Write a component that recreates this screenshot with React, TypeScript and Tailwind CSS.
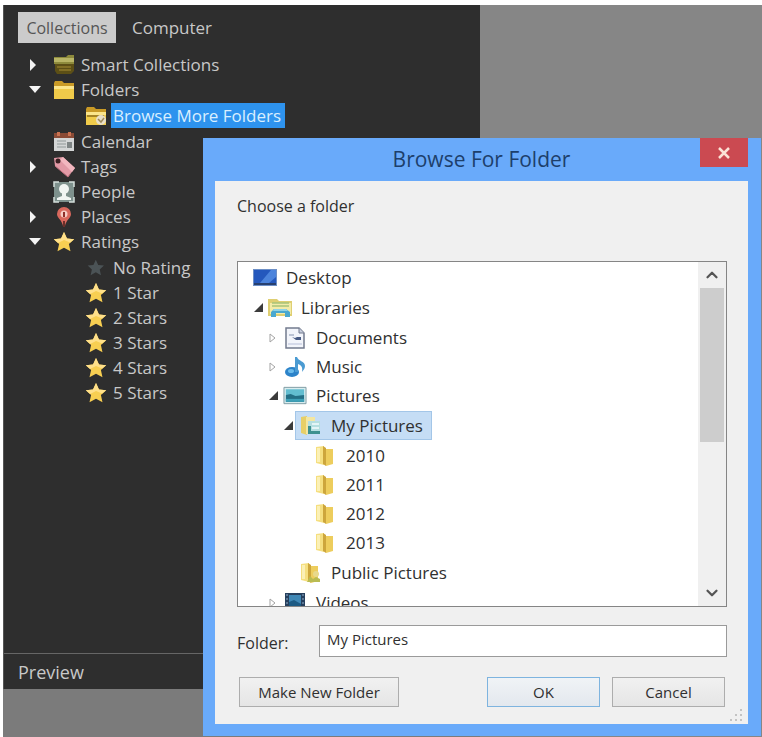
import { useState, type ReactNode } from "react";
import { ChevronDown, ChevronUp } from "lucide-react";
import { clsx } from "clsx";

type TreeNode = {
  label: string;
  icon: ReactNode;
  open?: boolean;
  closed?: boolean;
  children?: TreeNode[];
};

function Star({ muted = false }: { muted?: boolean }) {
  return (
    <svg width="22" height="22" viewBox="0 0 22 22" aria-hidden="true">
      <path
        d="M11 1l3 6.6 7.2.6-5.3 4.9 1.6 7.2L11 16.700l-6.500 3.600 1.600-7.200L.8 8.200 8 7.600z"
        fill={muted ? "#4b5356" : "#f8cf52"}
        transform={muted ? "translate(2 2) scale(.8)" : undefined}
      />
      {!muted && <path d="M11 1l3 6.600 7.200.6-4 3.200L11 9 5 12 .8 8.200 8 7.600z" fill="#ffe08a" />}
    </svg>
  );
}

function SmartIcon() {
  return (
    <svg width="22" height="22" viewBox="0 0 22 22" aria-hidden="true">
      <path d="M1 3h12l2-2h6v9H1z" fill="#8d8a3c" />
      <path d="M1 4h20v4H1z" fill="#b9b566" />
      <path d="M2 10h19v7l-3 3H4l-2-3z" fill="#5c4f16" />
      <path d="M4 13h14M6 16h12" stroke="#8d7a2b" strokeWidth="1.500" />
    </svg>
  );
}

function FolderIcon({ badge = false }: { badge?: boolean }) {
  return (
    <svg width="22" height="22" viewBox="0 0 22 22" aria-hidden="true">
      <path d="M1 4l1-2h7l2 2h10v15H1z" fill="#c99a26" />
      <path d="M1 7h20v13H1z" fill="#f0cb4a" />
      <path d="M1 7h20v3H1z" fill="#fbe58b" />
      {badge && (
        <>
          <path d="M2 11h17" stroke="#8c6d1b" strokeWidth="1.500" />
          <circle cx="16" cy="15" r="5" fill="#e8dfc8" />
          <path d="M13 14l3 3 3-4" fill="none" stroke="#a08a5a" strokeWidth="1.500" />
        </>
      )}
    </svg>
  );
}

function CalendarIcon() {
  return (
    <svg width="22" height="22" viewBox="0 0 22 22" aria-hidden="true">
      <path d="M1 2h20v6H1z" fill="#8a4b36" />
      <path d="M4 1h3v4H4zM15 1h3v4h-3z" fill="#c9714f" />
      <path d="M1 7h20v13H1z" fill="#d4d6d6" />
      <path d="M4 10h9M4 13h9M4 16h9" stroke="#a7adad" strokeWidth="1.500" />
      <path d="M14 11h5v6h-5z" fill="#7f8585" />
    </svg>
  );
}

function TagIcon() {
  return (
    <svg width="22" height="22" viewBox="0 0 22 22" aria-hidden="true">
      <path d="M1 2l9-1 12 11-7 9L2 10z" fill="#e29aa6" />
      <path d="M10 1l12 11-3 4L7 4z" fill="#f2b7bf" />
      <circle cx="5" cy="5" r="2.500" fill="#3b2023" />
      <path d="M2 10l13 11 2-3" fill="none" stroke="#b96c79" />
    </svg>
  );
}

function PeopleIcon() {
  return (
    <svg width="22" height="22" viewBox="0 0 22 22" aria-hidden="true">
      <path d="M1 1h20v20H1z" fill="#7e918d" />
      <path d="M1 6V1h5M16 1h5v5M21 16v5h-5M6 21H1v-5" fill="none" stroke="#d5dfdc" strokeWidth="1.500" />
      <circle cx="11" cy="8" r="5" fill="#f1f5f3" />
      <path d="M9 11h4v4l5 2v2H4v-2l5-2z" fill="#f1f5f3" />
    </svg>
  );
}

function PlaceIcon() {
  return (
    <svg width="22" height="22" viewBox="0 0 22 22" aria-hidden="true">
      <path d="M11 1a7 7 0 0 0-7 7c0 4 5 6 6 12h2c1-6 6-8 6-12a7 7 0 0 0-7-7z" fill="#d9685d" />
      <circle cx="11" cy="8" r="3.500" fill="#f6cdc6" />
      <path d="M11 6v5" stroke="#8f2f2a" strokeWidth="2" />
      <path d="M10 15h2v6h-2z" fill="#6a2f2a" />
    </svg>
  );
}

function DesktopIcon() {
  return (
    <svg width="24" height="22" viewBox="0 0 24 22" aria-hidden="true">
      <path d="M0 2h24v17H0z" fill="#6d8fc6" />
      <path d="M1 3h22v13H1z" fill="#2458bd" />
      <path d="M7 16L18 3h5v7l-7 6z" fill="#4c84dc" />
      <path d="M1 16h22v2H1z" fill="#27406f" />
    </svg>
  );
}

function LibraryIcon() {
  return (
    <svg width="26" height="22" viewBox="0 0 26 22" className="shrink-0" aria-hidden="true">
      <path d="M1 2h9l2 2h13v15H1z" fill="#dfcf72" />
      <path d="M3 6h21v11H3z" fill="#f3eba8" />
      <path d="M5 9h17M5 6h17" stroke="#a8c47a" strokeWidth="1.500" />
      <path d="M4 20v-5l3-3h12l4 3v5h-5v-4H9v4z" fill="#4aa8cf" />
      <path d="M7 12h12l2 2H6z" fill="#8fd2e6" />
    </svg>
  );
}

function DocumentIcon() {
  return (
    <svg width="22" height="24" viewBox="0 0 22 24" aria-hidden="true">
      <path d="M2 2h13l5 5v15H2z" fill="#f3f5fb" stroke="#737b8e" strokeWidth="1.500" />
      <path d="M15 2v5h5" fill="#c8cede" stroke="#737b8e" />
      <path d="M5 9h5" stroke="#aab3c8" strokeWidth="1.500" />
      <path d="M8 11l3 1 2-1h4v3h-5z" fill="#4a5d86" />
      <path d="M4 18h14" stroke="#d5daea" strokeWidth="2" />
    </svg>
  );
}

function MusicIcon() {
  return (
    <svg width="22" height="24" viewBox="0 0 22 24" aria-hidden="true">
      <ellipse cx="8" cy="17" rx="7" ry="5" fill="#2c83c9" />
      <path d="M11 17V2h2c1 4 8 4 8 9 0 3-2 4-3 6 1-5-1-7-4-8v8z" fill="#4b9bd2" />
      <ellipse cx="7" cy="16" rx="3" ry="2" fill="#6bbcec" />
    </svg>
  );
}

function PicturesIcon() {
  return (
    <svg width="25" height="22" viewBox="0 0 25 22" aria-hidden="true">
      <path d="M1 2h23v17H1z" fill="#d8ecee" stroke="#7d9ba3" />
      <path d="M3 4h19v13H3z" fill="#62bdd0" />
      <path d="M3 10l5-1 5 2 9-1v7H3z" fill="#246f85" />
      <path d="M3 14h19v3H3z" fill="#3fa1b8" />
    </svg>
  );
}

function MyPicturesIcon() {
  return (
    <svg width="24" height="24" viewBox="0 0 24 24" aria-hidden="true">
      <path d="M3 3l6-1v19l-6-2z" fill="#e7cf67" />
      <path d="M8 3h9v17H8z" fill="#f3e6a1" />
      <path d="M10 7h12v13H10z" fill="#b5dfe0" />
      <path d="M10 12h3v5h9v3H10z" fill="#3d918f" />
      <path d="M14 9h7v2h-7zM14 13h7v2h-7z" fill="#e4f5f6" />
    </svg>
  );
}

function YellowFolder({ shared = false }: { shared?: boolean }) {
  return (
    <svg width="24" height="24" viewBox="0 0 24 24" aria-hidden="true">
      <path d="M3 3l8-1v19l-8-2z" fill="#f5df80" />
      <path d="M10 2l3 2v18l-3-2z" fill="#cda63c" />
      <path d="M13 5h7v15l-7 2z" fill="#edcd5d" />
      <path d="M4 4h3v14H4z" fill="#fbf0b6" />
      {shared && (
        <>
          <circle cx="18" cy="13" r="3" fill="#e8d98c" />
          <path d="M9 21l3-6 3 3 3-2 4 2v3z" fill="#b9bb52" />
        </>
      )}
    </svg>
  );
}

function VideoIcon() {
  return (
    <svg width="22" height="24" viewBox="0 0 22 24" aria-hidden="true">
      <path d="M1 2h20v19H1z" fill="#263f5d" />
      <path d="M5 4h12v15H5z" fill="#3f87b5" />
      <path d="M5 11l5-2 7 4v6H5z" fill="#1c5a83" />
      <path d="M3 3v17M19 3v17" stroke="#6f8aa5" strokeWidth="1.500" strokeDasharray="2 2" />
    </svg>
  );
}

const collections: TreeNode[] = [
  { label: "Smart Collections", icon: <SmartIcon />, closed: true },
  {
    label: "Folders",
    icon: <FolderIcon />,
    open: true,
    children: [{ label: "Browse More Folders", icon: <FolderIcon badge /> }],
  },
  { label: "Calendar", icon: <CalendarIcon /> },
  { label: "Tags", icon: <TagIcon />, closed: true },
  { label: "People", icon: <PeopleIcon /> },
  { label: "Places", icon: <PlaceIcon />, closed: true },
  {
    label: "Ratings",
    icon: <Star />,
    open: true,
    children: [
      { label: "No Rating", icon: <Star muted /> },
      { label: "1 Star", icon: <Star /> },
      { label: "2 Stars", icon: <Star /> },
      { label: "3 Stars", icon: <Star /> },
      { label: "4 Stars", icon: <Star /> },
      { label: "5 Stars", icon: <Star /> },
    ],
  },
];

const folders: TreeNode[] = [
  {
    label: "Desktop",
    icon: <DesktopIcon />,
    children: [
      {
        label: "Libraries",
        icon: <LibraryIcon />,
        open: true,
        children: [
          { label: "Documents", icon: <DocumentIcon />, closed: true },
          { label: "Music", icon: <MusicIcon />, closed: true },
          {
            label: "Pictures",
            icon: <PicturesIcon />,
            open: true,
            children: [
              {
                label: "My Pictures",
                icon: <MyPicturesIcon />,
                open: true,
                children: ["2010", "2011", "2012", "2013"].map((label) => ({ label, icon: <YellowFolder /> })),
              },
              { label: "Public Pictures", icon: <YellowFolder shared /> },
            ],
          },
          { label: "Videos", icon: <VideoIcon />, closed: true },
        ],
      },
    ],
  },
];

function CollectionTree({ nodes }: { nodes: TreeNode[] }) {
  return (
    <>
      {nodes.map((node) => (
        <li key={node.label}>
          <div className="flex h-[25px] items-center">
            <span className="flex w-6 shrink-0">
              {node.closed && (
                <svg width="10" height="14" viewBox="0 0 10 14" aria-hidden="true">
                  <path d="M1 1l6 6-6 6z" fill="#f4f4f4" />
                </svg>
              )}
              {node.open && (
                <svg width="12" height="10" viewBox="0 0 12 10" aria-hidden="true">
                  <path d="M0 1h12L6 8z" fill="#f4f4f4" />
                </svg>
              )}
            </span>
            <button type="button" className="flex items-center gap-1 whitespace-nowrap">
              {node.icon}
              <span
                className={clsx(
                  "h-[25px] pl-0.5 leading-[25px]",
                  node.label === "Browse More Folders" && "bg-[#2e93ee] pr-1 text-[#d9efff]",
                )}
              >
                {node.label}
              </span>
            </button>
          </div>
          {node.children && (
            <ul className="py-px pl-8">
              <CollectionTree nodes={node.children} />
            </ul>
          )}
        </li>
      ))}
    </>
  );
}

type FolderTreeProps = {
  nodes: TreeNode[];
  selected: string;
  onSelect: (label: string) => void;
};

function FolderTree({ nodes, selected, onSelect }: FolderTreeProps) {
  return (
    <>
      {nodes.map((node) => (
        <li key={node.label}>
          <div className="flex h-[29px] items-center">
            <span className="flex w-3 shrink-0">
              {node.closed && (
                <svg width="10" height="12" viewBox="0 0 10 12" aria-hidden="true">
                  <path d="M2 2l5 4-5 4z" fill="#fff" stroke="#a3a3a3" />
                </svg>
              )}
              {node.open && (
                <svg width="11" height="11" viewBox="0 0 11 11" aria-hidden="true">
                  <path d="M10 1v9H1z" fill="#3b3b3b" />
                </svg>
              )}
            </span>
            <button
              type="button"
              onClick={() => onSelect(node.label)}
              className={clsx(
                "flex h-[29px] items-center gap-[9px] border pr-2 pl-0.5 whitespace-nowrap",
                node.label === selected ? "border-[#a3c6e8] bg-[#c5ddf5]" : "border-transparent",
              )}
            >
              <span className="flex w-6 justify-center">{node.icon}</span>
              {node.label}
            </button>
          </div>
          {node.children && (
            <ul className="py-px pl-[15px]">
              <FolderTree nodes={node.children} selected={selected} onSelect={onSelect} />
            </ul>
          )}
        </li>
      ))}
    </>
  );
}

function BrowseDialog() {
  const [selected, setSelected] = useState("My Pictures");

  return (
    <section
      role="dialog"
      aria-labelledby="dialog-title"
      className="absolute top-[133px] right-px left-[200px] bg-[#69aafa] pr-[13px] pb-3 pl-3 text-[#303030]"
    >
      <header className="flex h-[43px] items-start">
        <h1 id="dialog-title" className="flex-1 pl-12 text-center text-[21px] leading-[43px] text-[#1d3f6b]">
          Browse For Folder
        </h1>
        <button type="button" aria-label="Close" className="flex h-[29px] w-12 items-center justify-center bg-[#cb4a51]">
          <svg width="14" height="14" viewBox="0 0 14 14" aria-hidden="true">
            <path d="M2 2l10 10M12 2L2 12" stroke="#fbe3d6" strokeWidth="2.500" />
          </svg>
        </button>
      </header>

      <div className="relative bg-[#f0f0f0] pt-3 pr-[21px] pb-[17px] pl-[22px]">
        <p className="h-[68px] text-[16px] leading-[26px]">Choose a folder</p>

        <div className="flex h-[346px] overflow-hidden border border-[#858585] bg-white">
          <ul className="min-w-0 flex-1 pt-px text-[17px]">
            <FolderTree nodes={folders} selected={selected} onSelect={setSelected} />
          </ul>
          <div className="flex w-7 flex-col items-center bg-[#f0f0f0]">
            <button type="button" aria-label="Scroll up" className="flex h-[26px] items-center">
              <ChevronUp size={18} strokeWidth={3} className="text-[#555]" />
            </button>
            <div className="h-[154px] w-6 bg-[#cdcdcd]" />
            <div className="flex-1" />
            <button type="button" aria-label="Scroll down" className="flex h-[26px] items-center">
              <ChevronDown size={18} strokeWidth={3} className="text-[#555]" />
            </button>
          </div>
        </div>

        <div className="mt-[18px] flex text-[16px]">
          <label htmlFor="folder" className="w-[82px] shrink-0 pt-1 leading-[28px]">
            Folder:
          </label>
          <input
            id="folder"
            value={selected}
            onChange={(event) => setSelected(event.target.value)}
            className="h-8 min-w-0 flex-1 border border-[#9a9a9a] bg-white px-[7px] pb-1 text-[15px] outline-none"
          />
        </div>

        <div className="mt-5 flex gap-3 pr-0.5 pl-0.5 text-[15px]">
          <button type="button" className="mr-auto h-[30px] w-40 border border-[#adadad] bg-linear-to-b from-[#f1f1f1] to-[#e5e5e5]">
            Make New Folder
          </button>
          <button type="button" className="h-[30px] w-[113px] border border-[#7eb4df] bg-linear-to-b from-[#f0f3f6] to-[#e3e8ee]">
            OK
          </button>
          <button type="button" className="h-[30px] w-[113px] border border-[#adadad] bg-linear-to-b from-[#f1f1f1] to-[#e5e5e5]">
            Cancel
          </button>
        </div>

        <svg width="14" height="14" viewBox="0 0 14 14" className="absolute right-1 bottom-0.5" aria-hidden="true">
          <path d="M10 1h2v2h-2zM10 6h2v2h-2zM10 11h2v2h-2zM5 6h2v2H5zM5 11h2v2H5zM0 11h2v2H0z" fill="#c3c3c3" />
        </svg>
      </div>
    </section>
  );
}

export default function App() {
  return (
    <div className="flex min-h-screen bg-white pt-[5px] pl-[3px] font-['Open_Sans','Noto_Sans',sans-serif]">
      <main className="relative flex flex-1 bg-[#868686]">
        <div className="flex w-[477px] shrink-0 flex-col bg-[#7b7b7b] pb-12">
          <aside className="flex flex-1 flex-col border-l border-[#555] bg-[#2e2e2e] text-[17px] text-[#c8c8c8]">
            <nav className="flex px-3.5 pt-[7px]">
              <button type="button" className="h-[31px] w-[98px] bg-[#cbcbcb] text-[16px] text-[#555]">
                Collections
              </button>
              <button type="button" className="h-[31px] px-4">
                Computer
              </button>
            </nav>
            <ul className="flex-1 pt-[9px] pl-[25px]">
              <CollectionTree nodes={collections} />
            </ul>
            <h2 className="h-9 border-t border-[#666] pl-3.5 text-[18px] leading-9">Preview</h2>
          </aside>
        </div>
        <BrowseDialog />
      </main>
    </div>
  );
}
